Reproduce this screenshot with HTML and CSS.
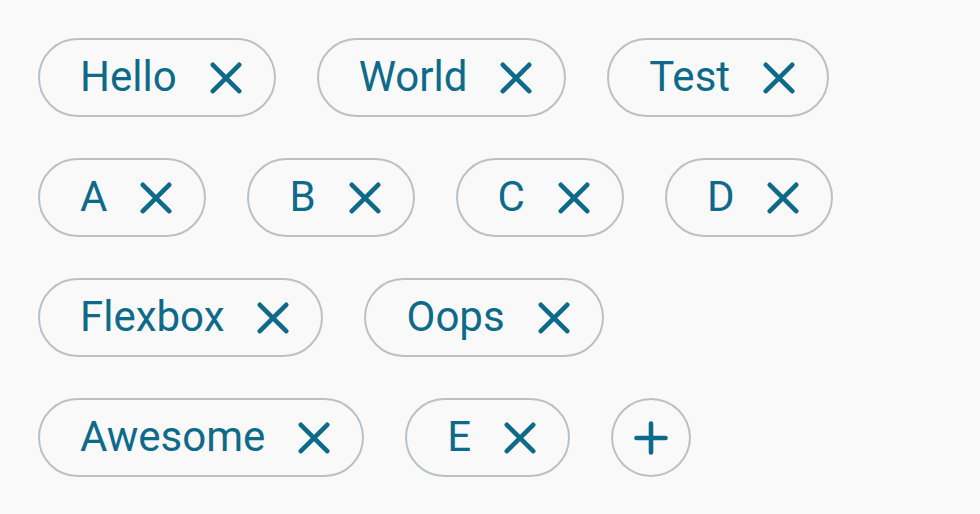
FILE: index.html
```html
<!DOCTYPE html>
<html>
<head>
<meta charset="utf-8">
<link rel="stylesheet" href="styles.css">
</head>
<body>
<div class="chips">
  <div class="row">
    <div class="chip"><span class="label">Hello</span><svg class="x" viewBox="0 0 32 32"><path d="M2.8 2.8L29.2 29.2M29.2 2.8L2.8 29.2"/></svg></div>
    <div class="chip"><span class="label">World</span><svg class="x" viewBox="0 0 32 32"><path d="M2.8 2.8L29.2 29.2M29.2 2.8L2.8 29.2"/></svg></div>
    <div class="chip"><span class="label">Test</span><svg class="x" viewBox="0 0 32 32"><path d="M2.8 2.8L29.2 29.2M29.2 2.8L2.8 29.2"/></svg></div>
  </div>
  <div class="row">
    <div class="chip"><span class="label">A</span><svg class="x" viewBox="0 0 32 32"><path d="M2.8 2.8L29.2 29.2M29.2 2.8L2.8 29.2"/></svg></div>
    <div class="chip"><span class="label">B</span><svg class="x" viewBox="0 0 32 32"><path d="M2.8 2.8L29.2 29.2M29.2 2.8L2.8 29.2"/></svg></div>
    <div class="chip"><span class="label">C</span><svg class="x" viewBox="0 0 32 32"><path d="M2.8 2.8L29.2 29.2M29.2 2.8L2.8 29.2"/></svg></div>
    <div class="chip"><span class="label">D</span><svg class="x" viewBox="0 0 32 32"><path d="M2.8 2.8L29.2 29.2M29.2 2.8L2.8 29.2"/></svg></div>
  </div>
  <div class="row">
    <div class="chip"><span class="label">Flexbox</span><svg class="x" viewBox="0 0 32 32"><path d="M2.8 2.8L29.2 29.2M29.2 2.8L2.8 29.2"/></svg></div>
    <div class="chip"><span class="label">Oops</span><svg class="x" viewBox="0 0 32 32"><path d="M2.8 2.8L29.2 29.2M29.2 2.8L2.8 29.2"/></svg></div>
  </div>
  <div class="row">
    <div class="chip"><span class="label">Awesome</span><svg class="x" viewBox="0 0 32 32"><path d="M2.8 2.8L29.2 29.2M29.2 2.8L2.8 29.2"/></svg></div>
    <div class="chip"><span class="label">E</span><svg class="x" viewBox="0 0 32 32"><path d="M2.8 2.8L29.2 29.2M29.2 2.8L2.8 29.2"/></svg></div>
    <div class="add"><svg class="plus" viewBox="0 0 34 34"><path d="M2.5 17H31.5M17 2.5V31.5"/></svg></div>
  </div>
</div>
</body>
</html>
```
FILE: styles.css
```css
html, body {
  margin: 0;
  padding: 0;
  background: #f9f9f9;
}
body {
  font-family: Roboto, "Liberation Sans", sans-serif;
  width: 980px;
  height: 514px;
  overflow: hidden;
}
.chips {
  display: flex;
  flex-direction: column;
  gap: 41px;
  padding: 38px 0 0 38px;
}
.row {
  display: flex;
  gap: 41px;
}
.chip {
  box-sizing: border-box;
  height: 79px;
  display: flex;
  align-items: center;
  border: 2px solid #b9c1c6;
  border-radius: 40px;
  padding: 0 32px 0 40px;
  color: #0d6a8b;
}
.label {
  font-size: 42px;
  line-height: 1;
  margin-right: 33px;
  position: relative;
  top: -1px;
}
.x {
  width: 32px;
  height: 32px;
  fill: none;
  stroke: #0d6a8b;
  stroke-width: 4.6;
  stroke-linecap: round;
}
.add {
  box-sizing: border-box;
  width: 80px;
  height: 79px;
  border: 2px solid #b9c1c6;
  border-radius: 50%;
  display: flex;
  align-items: center;
  justify-content: center;
}
.plus {
  width: 34px;
  height: 34px;
  fill: none;
  stroke: #0d6a8b;
  stroke-width: 4.6;
  stroke-linecap: round;
}
```
